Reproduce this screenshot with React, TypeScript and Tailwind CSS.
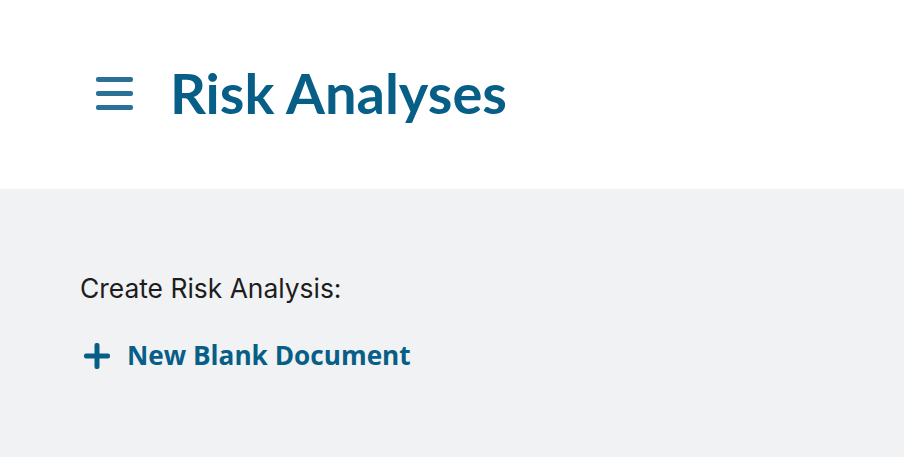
import React from "react";

function MenuIcon() {
  return (
    <svg width="37" height="33" viewBox="0 0 37 33" aria-hidden="true">
      <rect x="0" y="0" width="37" height="5" rx="2" fill="#2b7096" />
      <rect x="0" y="14" width="37" height="5" rx="2" fill="#2b7096" />
      <rect x="0" y="28" width="37" height="5" rx="2" fill="#2b7096" />
    </svg>
  );
}

function PlusIcon() {
  return (
    <svg width="26" height="26" viewBox="0 0 26 26" aria-hidden="true">
      <rect x="10.5" y="0" width="5" height="26" rx="2" fill="#075e87" />
      <rect x="0" y="10.5" width="26" height="5" rx="2" fill="#075e87" />
    </svg>
  );
}

export default function App() {
  return (
    <div className="min-h-[457px] w-full bg-[#f1f2f4] flex flex-col">
      <header className="h-[189px] bg-white flex items-center pl-[96px] pb-[3px]">
        <button className="flex items-center mr-[37px]">
          <MenuIcon />
        </button>
        <h1
          className="text-[56px] font-bold text-[#075e87] leading-none"
          style={{ fontFamily: "Lato, sans-serif" }}
        >
          Risk Analyses
        </h1>
      </header>
      <main className="pl-[80px] pt-[86px]">
        <p
          className="text-[26.4px] text-[#1d1d1d] leading-none"
          style={{ fontFamily: "Inter, sans-serif" }}
        >
          Create Risk Analysis:
        </p>
        <button className="mt-[41px] flex items-center gap-[17px] pl-[4px]">
          <PlusIcon />
          <span
            className="text-[26.2px] font-bold text-[#075e87] leading-none"
            style={{ fontFamily: "'Open Sans', sans-serif" }}
          >
            New Blank Document
          </span>
        </button>
      </main>
    </div>
  );
}
